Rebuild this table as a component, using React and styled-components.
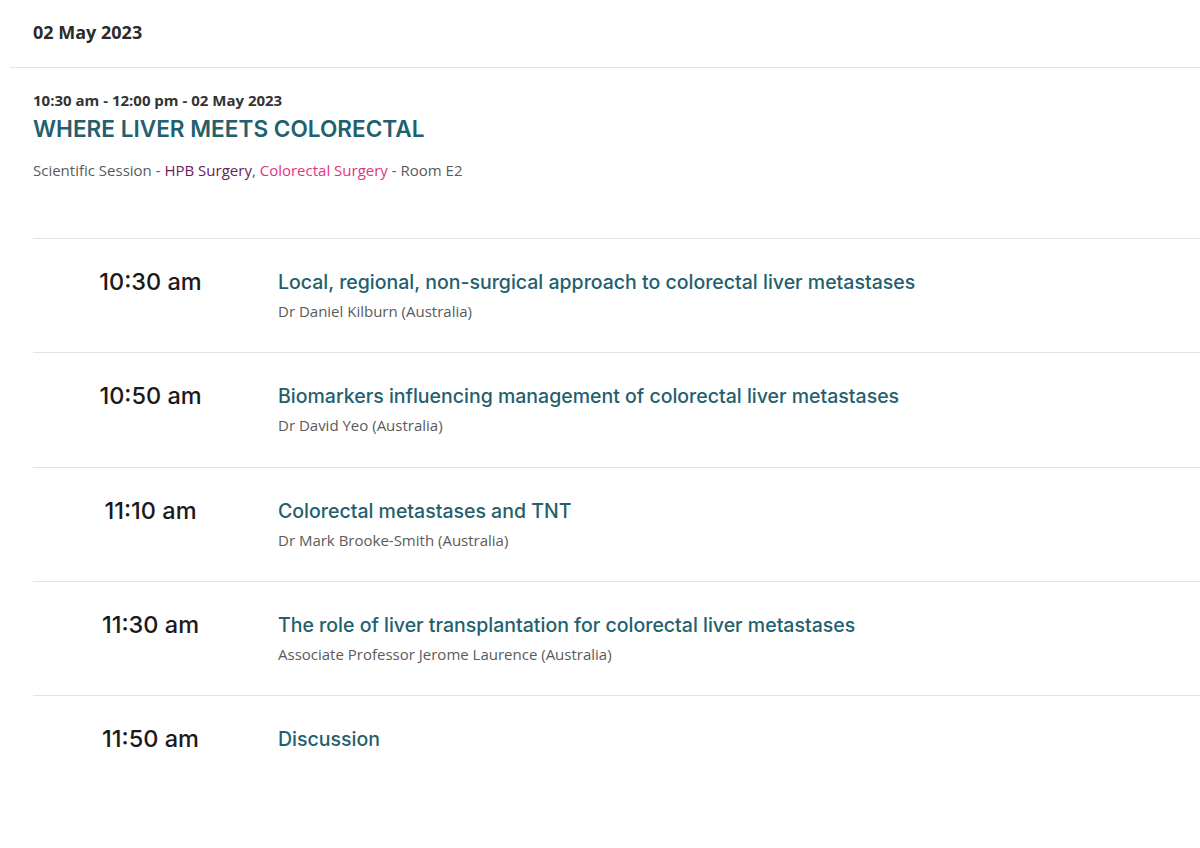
import React from 'react';
import styled, { createGlobalStyle } from 'styled-components';

const GlobalStyle = createGlobalStyle`
  body {
    margin: 0;
    background: #ffffff;
    font-family: "Open Sans", "Liberation Sans", sans-serif;
  }
`;

const Page = styled.div`
  padding: 0 0 0 10px;
`;

const DayHeader = styled.h2`
  margin: 0;
  padding: 20px 23px 0;
  height: 68px;
  box-sizing: border-box;
  font-size: 18px;
  font-weight: 700;
  color: #2b2b2b;
  border-bottom: 1px solid #e4e4e4;
`;

const Session = styled.section`
  padding: 22px 0 0 23px;
`;

const SessionTime = styled.div`
  font-size: 15px;
  font-weight: 700;
  color: #333333;
  line-height: 20px;
`;

const SessionTitle = styled.h1`
  margin: 4px 0 0;
  font-family: "Inter", sans-serif;
  font-size: 22.6px;
  font-weight: 600;
  color: #235f6e;
  line-height: 30px;
`;

const Meta = styled.p`
  margin: 15px 0 0;
  font-size: 15px;
  line-height: 22px;
  color: #5a5a5a;
`;

const Tag = styled.span`
  color: ${({ $tone }) => $tone};
`;

const Program = styled.div`
  margin-top: 57px;
  border-top: 1px solid #e4e4e4;
`;

const Row = styled.div`
  display: grid;
  grid-template-columns: 235px 1fr;
  column-gap: 10px;
  height: 114.3px;
  box-sizing: border-box;
  padding-top: 29px;
  border-bottom: ${({ $last }) => ($last ? 'none' : '1px solid #e4e4e4')};
`;

const Time = styled.div`
  font-family: "Inter", sans-serif;
  font-size: 23.5px;
  font-weight: 500;
  color: #1a1a1a;
  text-align: center;
  line-height: 28px;
`;

const Talk = styled.div`
  display: flex;
  flex-direction: column;
  gap: 4px;
`;

const TalkTitle = styled.div`
  font-family: "Inter", sans-serif;
  font-size: 19.5px;
  font-weight: 500;
  color: #235f6e;
  line-height: 28px;
`;

const Speaker = styled.div`
  font-size: 15px;
  color: #5a5a5a;
  line-height: 22px;
`;

const talks = [
  {
    time: '10:30 am',
    title: 'Local, regional, non-surgical approach to colorectal liver metastases',
    speaker: 'Dr Daniel Kilburn (Australia)',
  },
  {
    time: '10:50 am',
    title: 'Biomarkers influencing management of colorectal liver metastases',
    speaker: 'Dr David Yeo (Australia)',
  },
  {
    time: '11:10 am',
    title: 'Colorectal metastases and TNT',
    speaker: 'Dr Mark Brooke-Smith (Australia)',
  },
  {
    time: '11:30 am',
    title: 'The role of liver transplantation for colorectal liver metastases',
    speaker: 'Associate Professor Jerome Laurence (Australia)',
  },
  {
    time: '11:50 am',
    title: 'Discussion',
  },
];

const App = () => (
  <>
    <GlobalStyle />
    <Page>
      <DayHeader>02 May 2023</DayHeader>
      <Session>
        <SessionTime>10:30 am - 12:00 pm - 02 May 2023</SessionTime>
        <SessionTitle>WHERE LIVER MEETS COLORECTAL</SessionTitle>
        <Meta>
          Scientific Session - <Tag $tone="#6a1b5c">HPB Surgery</Tag>,{' '}
          <Tag $tone="#e2337f">Colorectal Surgery</Tag> - Room E2
        </Meta>
        <Program>
          {talks.map((talk, index) => (
            <Row key={index} $last={index === talks.length - 1}>
              <Time>{talk.time}</Time>
              <Talk>
                <TalkTitle>{talk.title}</TalkTitle>
                {talk.speaker && <Speaker>{talk.speaker}</Speaker>}
              </Talk>
            </Row>
          ))}
        </Program>
      </Session>
    </Page>
  </>
);

export default App;
